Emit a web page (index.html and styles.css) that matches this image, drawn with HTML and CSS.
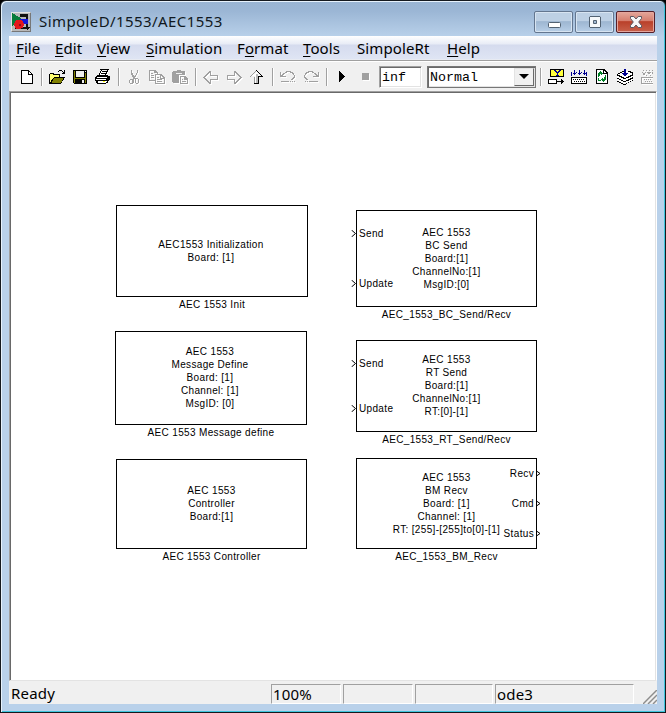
FILE: index.html
```html
<!DOCTYPE html>
<html lang="en">
<head>
<meta charset="utf-8">
<title>SimpoleD/1553/AEC1553</title>
<link rel="stylesheet" href="styles.css">
</head>
<body>
<div class="window">
  <header class="titlebar">
    <svg class="app-icon" width="20" height="20" viewBox="0 0 20 20" shape-rendering="crispEdges">
      <path fill="#b8b8b8" d="M0 0h20v20H0z"/><path fill="#e4e4e4" d="M0 0h19v1H1v18H0z"/><path fill="#777" d="M19 1h1v19H1v-1h18z"/>
      <path fill="#111" d="M9 2h8v13h2l-3 3-3-3h2V5H9z"/>
      <path fill="#087c3b" d="M1 1l9 5v3l-9 5z"/>
      <path fill="#1515d8" d="M9 7h8v5H9z"/><path fill="#111" d="M4 15h13v2H4z"/>
      <circle cx="8" cy="12.5" r="4.8" fill="#e3171b"/><path fill="#87101a" d="M8 12h2v2H8z"/>
    </svg>
    <h1 class="title">SimpoleD/1553/AEC1553</h1>
    <div class="controls">
      <button class="control" aria-label="Minimize"><svg width="14" height="14" viewBox="0 0 14 14"><rect x="1.500" y="7.500" width="12" height="5" rx="1" fill="#fff" stroke="#526272"/></svg></button>
      <button class="control" aria-label="Maximize"><svg width="14" height="14" viewBox="0 0 14 14"><path fill="#f5f8fa" fill-rule="evenodd" stroke="#526272" d="M2 1.500h10l.5.5v10l-.5.5H2l-.5-.5V2zM5.500 5.500v3h3v-3z"/></svg></button>
      <button class="control close" aria-label="Close"><svg width="14" height="14" viewBox="0 0 14 14"><path fill="#f7f7f7" stroke="#5b5963" stroke-linejoin="round" d="M1.500 1.500h3.300L7 4l2.200-2.500h3.300v2L9.700 7l2.800 3.500v2H9.200L7 10l-2.200 2.500H1.500v-2L4.300 7 1.500 3.500z"/></svg></button>
    </div>
  </header>
  <main class="client">
    <nav class="menu">
      <span class="m-file"><u>F</u>ile</span><span class="m-edit"><u>E</u>dit</span><span class="m-view"><u>V</u>iew</span><span class="m-sim"><u>S</u>imulation</span><span class="m-format">F<u>o</u>rmat</span><span class="m-tools"><u>T</u>ools</span><span class="m-rt">SimpoleRt</span><span class="m-help"><u>H</u>elp</span>
    </nav>
    <div class="toolbar">
      <span class="tool first"><svg viewBox="0 0 16 16"><path fill="#fff" d="M3 2h7l3 3v9H3z"/><path d="M2 1h8v1H3v12h10V5h1v10H2zM10 2h1v1h1v1h1v1h1v1H9V2z"/><path fill="#fff" d="M10 3h1v1h1v1h-2z"/></svg></span>
      <i class="sep"></i>
      <span class="tool"><svg viewBox="0 0 16 16"><path fill="#ffff70" d="M1 5h4v1h6v3H5l-3 5H1z"/><path fill="#808000" d="M5 9h10l-3 5H2z"/><path d="M1 4h4v1h6v3h-1V6H4V5H1v8h1v-2h1v-1h1V9h1V8h11v1h-1v2h-1v1h-1v2h-1v1H0V5h1zM5 9v1H4v2H3v2h9v-1h1v-2h1V9zM9 2h1V1h3v1h1v1h1V1h1v4h-3V4h1V3h-1V2h-3v1H9z"/></svg></span>
      <span class="tool"><svg viewBox="0 0 16 16"><path d="M1 1h14v14H2v-1H1z"/><path fill="#808000" d="M2 2h1v7h10V4h1v10h-1v-4H3v4H2z"/><path fill="#efefef" d="M4 2h8v6H4zM13 2h1v1h-1zM10 11h2v3h-2z"/></svg></span>
      <span class="tool"><svg viewBox="0 0 16 16"><path fill="#fff" d="M5 2h9l-2 5 2 1-2 6H2L1 9l3-3z"/><path d="M5 0h9v1h-1v2h-1v2h-1v1h2v1h2v4h-1v1h-1v2h-2v1H2v-1H1v-2H0V8h1V7h1V6h2V4h1V2h1V1H5zM7 1v1H6v2H5v2h5V4h1V2h1V1zM2 8v1h10V8zm-1 2v1h10v-1zm2 2v2h8v-1h1v-1z" fill-rule="evenodd"/><path d="M7 2h4v1H7zM6 4h4v1H6zM12 8h1v1h-1zM13 10h1v1h-1z"/><path fill="#ffff00" d="M8 12h2v1H8z"/></svg></span>
      <i class="sep"></i>
      <span class="tool"><svg class="off" viewBox="0 0 16 16"><path d="M5 1h1v3h1v2h1v1h1V6h1V4h1V1h1v3h-1v2h-1v2H9v1h3v1h1v4h-1v1h-2v-1H9v-4H8v4H7v1H4v-1H3v-3h1v-1h3V8H6V6H5zm0 10H4v3h2v-3zm5-1v4h2v-4z"/></svg></span>
      <span class="tool"><svg class="off" viewBox="0 0 16 16"><path d="M0 1h6l3 3v1H8V4H5V2H1v9h5v1H0zM6 5h6l4 4v6H6zm1 1v8h8v-4h-4V6zm5 1v2h2zM2 4h2v1H2zM2 6h3v1H2zM2 8h3v1H2zM8 8h2v1H8zM8 10h5v1H8zM8 12h5v1H8z"/></svg></span>
      <span class="tool"><svg class="off" viewBox="0 0 16 16"><path d="M1 2h4V1h4v1h4v4H7v8H1V13H0V3h1zM8 7h5l3 3v5H8zm1 1v6h6v-3h-3V8zm1 2h1v1h-1zm0 2h4v1h-4z"/><path fill="#efefef" d="M4 4h6v1H4z"/></svg></span>
      <i class="sep"></i>
      <span class="tool"><svg class="off" viewBox="0 0 16 16"><path d="M6 2h2v4h7v5H8v4H6v-1H5v-1H4v-1H3v-1H2v-1H1V9H0V8h1V7h1V6h1V5h1V4h1V3h1zm0 2v1H5v1H4v1H3v1H2v1h1v1h1v1h1v1h1v1h1v-3h7V7H7V4z"/></svg></span>
      <span class="tool"><svg class="off" viewBox="0 0 16 16"><path transform="translate(16 0) scale(-1 1)" d="M6 2h2v4h7v5H8v4H6v-1H5v-1H4v-1H3v-1H2v-1H1V9H0V8h1V7h1V6h1V5h1V4h1V3h1zm0 2v1H5v1H4v1H3v1H2v1h1v1h1v1h1v1h1v1h1v-3h7V7H7V4z"/></svg></span>
      <span class="tool"><svg viewBox="0 0 16 16"><path fill="#999" d="M7 1h1v1H7v1H6v1H5v1H4v1H3v1H2v1h4v7H5V8H1V7h1V6h1V5h1V4h1V3h1V2h1z"/><path fill="#fff" d="M7 3h1v1h1v1h1v1h1v1H9v7H6V7H3V6h1V5h2V4h1z"/><path fill="#bbb" d="M7 5h2v9H7z"/><path d="M7 1h1v1h1v1h1v1h1v1h1v1h1v1h1v1h-4v7H5v-1h4V7h3V6h-1V5h-1V4H9V3H8V2H7z"/></svg></span>
      <i class="sep"></i>
      <span class="tool"><svg class="off" viewBox="0 0 16 16"><path d="M0 3h1v3h1V5h1V4h2V3h1V2h5v1h2v1h1v2h1v3h-1v1h-1v1h-2v-1h1V9h1V8h1V6h-1V5h-1V4h-2V3H7v1H5v1H4v1H3v1h3v1H0zM1 12h8v1H1zM10 12h1v1h-1zM12 12h1v1h-1zM14 12h1v1h-1z"/></svg></span>
      <span class="tool"><svg class="off" viewBox="0 0 16 16"><path transform="translate(16 0) scale(-1 1)" d="M0 3h1v3h1V5h1V4h2V3h1V2h5v1h2v1h1v2h1v3h-1v1h-1v1h-2v-1h1V9h1V8h1V6h-1V5h-1V4h-2V3H7v1H5v1H4v1H3v1h3v1H0z"/><path d="M2 12h1v1H2zM4 12h1v1H4zM6 12h9v1H6z"/></svg></span>
      <i class="sep"></i>
      <span class="tool"><svg viewBox="0 0 16 16"><path d="M5 2h1v1h1v1h1v1h1v1h1v1h1v1h-1v1H9v1H8v1H7v1H6v1H5z"/></svg></span>
      <span class="tool"><svg class="off" viewBox="0 0 16 16"><path d="M5 4h7v7H5z"/></svg></span>
      <span class="field stop-time">inf</span>
      <span class="field mode"><span>Normal</span><b class="drop"></b></span>
      <i class="sep"></i>
      <span class="tool"><svg viewBox="0 0 16 16"><path d="M2 0h14v8H2z"/><path fill="#ffff3c" d="M3 1h12v6H3z"/><path fill="#000090" d="M6 1h2v1h1v1h1V2h1V1h2v1h-1v1h-1v1h-1v2h1v1H8V6h1V4H8V3H7V2H6z"/><path fill="#fff" d="M1 11h7v3H1z"/><path d="M0 10h9v2h4v-2h1v1h1v1h1v1h-1v1h-1v1h-1v-2H9v2H0zm1 1v3h7v-3z"/></svg></span>
      <span class="tool"><svg viewBox="0 0 16 16"><path fill="#fff" d="M1 9h14v5H1z"/><path d="M0 8h16v7H0zm1 1v5h14V9z"/><path d="M2 10h1v1H2zM4 10h1v1H4zM6 10h1v1H6zM8 10h1v1H8zM10 10h1v1h-1zM12 10h1v1h-1zM3 12h1v1H3zM5 12h1v1H5zM7 12h1v1H7zM9 12h1v1H9zM11 12h1v1h-1zM13 12h1v1h-1z"/><path fill="#000090" d="M3 1h1v3h1v1H4v1H3V5H2V4h1zM8 1h1v3h1v1H9v1H8V5H7V4h1zM13 1h1v3h1v1h-1v1h-1V5h-1V4h1zM0 3h1v4H0zM5 3h1v1H5zM10 3h1v1h-1zM15 3h1v4h-1z"/></svg></span>
      <span class="tool"><svg viewBox="0 0 16 16"><path fill="#fff" d="M3 1h8l3 3v11H3z"/><path d="M2 0h9v1h1v1h1v1h1v12H2zm1 1v13h10V5H9V1zm7 1v2h2V3h-1V2z" fill-rule="evenodd"/><path fill="#008025" d="M6 2h1v1h1v1h1v1H8v1H7V5H6v2H5v1H4V4h1V3h1zM11 6h1v5h-1v1h-1v1H9v-1H8v-1H7v-1h1V9h1v1h1V8h1zM4 9h1v2h2v1H4z"/></svg></span>
      <span class="tool"><svg viewBox="0 0 16 16"><path fill="#fff" d="M0 5l8-4 8 4v6l-9 4-7-4z"/><path d="M5 2h2v1H5v1H3v1H1v1h2v1h2v1h2v1h2V8h2V7h2V6h2V4h-2V3h-2V2h3v1h2v1h1v2h-1v1h-2v1h-2v1H9v1H6V9H4V8H2V7H0V5h1V4h2V3h2zM0 9h2v1h2v1h2v1h3v-1h2v-1h2V9h2V8h1v2h-2v1h-2v1H9v1H6v-1H4v-1H2v-1H0zM0 12h2v1h2v1h2v1h3v-1h2v-1h2v-1h2v-1h1v1h-2v1h-2v1h-2v1H9v1H6v-1H4v-1H2v-1H0z"/><path fill="#000090" d="M7 0h2v4h2v1h-1v1H9v1H7V6H6V5H5V4h2z"/></svg></span>
      <span class="tool last"><svg class="off" viewBox="0 0 16 16"><path d="M3 1h1v1H3zM6 1h1v1H6zM9 1h1v1H9zM12 1h1v1h-1zM2 3h1v1H2zM5 3h1v1H5zM7 3h4v1h-1v1H8V4H7zM12 3h1v2h-1zM3 4h2v2H3zM6 6h1v1H6zM10 6h1v1h-1zM1 8h12v1H2v5h11v1H1zM4 10h1v1H4zM6 10h1v1H6zM8 10h1v1H8zM10 10h1v1h-1zM5 12h1v1H5zM7 12h1v1H7zM9 12h1v1H9zM11 12h1v1h-1z"/></svg></span>
    </div>
    <section class="canvas">
      <div class="block init"><p>AEC1553 Initialization</p><p>Board: [1]</p><div class="name">AEC 1553 Init</div></div>
      <div class="block define"><p>AEC 1553</p><p>Message Define</p><p>Board: [1]</p><p>Channel: [1]</p><p>MsgID: [0]</p><div class="name">AEC 1553 Message define</div></div>
      <div class="block controller"><p>AEC 1553</p><p>Controller</p><p>Board:[1]</p><div class="name">AEC 1553 Controller</div></div>
      <div class="block bc"><p>AEC 1553</p><p>BC Send</p><p>Board:[1]</p><p>ChannelNo:[1]</p><p>MsgID:[0]</p><div class="name">AEC_1553_BC_Send/Recv</div>
        <span class="port in bc-send"><svg viewBox="0 0 5 7"><path d="M.5 0l4 3.500-4 3.500"/></svg>Send</span><span class="port in bc-update"><svg viewBox="0 0 5 7"><path d="M.5 0l4 3.500-4 3.500"/></svg>Update</span></div>
      <div class="block rt"><p>AEC 1553</p><p>RT Send</p><p>Board:[1]</p><p>ChannelNo:[1]</p><p>RT:[0]-[1]</p><div class="name">AEC_1553_RT_Send/Recv</div>
        <span class="port in rt-send"><svg viewBox="0 0 5 7"><path d="M.5 0l4 3.500-4 3.500"/></svg>Send</span><span class="port in rt-update"><svg viewBox="0 0 5 7"><path d="M.5 0l4 3.500-4 3.500"/></svg>Update</span></div>
      <div class="block bm"><p>AEC 1553</p><p>BM Recv</p><p>Board: [1]</p><p>Channel: [1]</p><p>RT: [255]-[255]to[0]-[1]</p><div class="name">AEC_1553_BM_Recv</div>
        <span class="port out recv">Recv<svg viewBox="0 0 5 7"><path d="M.5 1l3.500 2.500L.5 6"/></svg></span><span class="port out cmd">Cmd<svg viewBox="0 0 5 7"><path d="M.5 1l3.500 2.500L.5 6"/></svg></span><span class="port out status-port">Status<svg viewBox="0 0 5 7"><path d="M.5 1l3.500 2.500L.5 6"/></svg></span></div>
    </section>
    <footer class="status">
      <span class="ready">Ready</span><span class="cell">100%</span><span class="cell"></span><span class="cell"></span><span class="cell">ode3</span>
      <svg class="grip" width="14" height="14" viewBox="0 0 14 14"><path stroke="#fff" d="M1 14L14 1M6 14l8-8M11 14l3-3"/><path stroke="#8d8d8d" stroke-width="1.500" d="M0 14L14 0M5 14l9-9M10 14l4-4"/></svg>
    </footer>
  </main>
</div>
</body>
</html>
```

FILE: styles.css
```css
* { box-sizing: border-box; }
body { margin: 0; background: #000; overflow: hidden; }
.window {
  width: 666px; height: 713px; padding: 1px 8px 8px;
  border: 1px solid #15191e; border-radius: 6px 6px 0 0;
  background: linear-gradient(#9ab5d3 0, #9bb6d5 10px, #b9d1ea 36px, #b9d1ea 100%);
  box-shadow: inset 1px 1px #e7f2fc, inset -1px -1px #3ec5dc;
  font: 15px/20px "Noto Sans", sans-serif; color: #000;
}
.titlebar { height: 34px; display: flex; align-items: flex-start; padding-left: 2px; }
.app-icon { margin-top: 10px; }
.title { margin: 9px 0 0 8px; font: 15px/20px "Noto Sans", sans-serif; letter-spacing: .42px; color: #101820; white-space: nowrap; }
.controls { display: flex; gap: 2px; margin: 9px 2px 0 auto; }
.control {
  width: 39px; height: 22px; padding: 0 0 0 1px; display: flex; align-items: center; justify-content: center;
  border: 1px solid #63768f; border-radius: 2px; box-shadow: inset 0 0 0 1px #d7e4f1;
  background: linear-gradient(#bdd0e4 0 45%, #9db6d1 48%, #b8cfe7);
}
.close { border-color: #55202a; box-shadow: inset 0 0 0 1px #e5a69d; background: linear-gradient(#e4a79b 0, #d67d6d 45%, #b9402a 48%, #c8614b); }
.client { width: 648px; height: 668px; background: #f0f0f0; display: flex; flex-direction: column; }
.menu {
  height: 26px; padding: 2px 0 0 7px; display: flex; flex: none; white-space: nowrap; letter-spacing: .1px;
  background: linear-gradient(#fff 0, #e8ecf6 8px, #d5dbee 9px, #dfe5f4 23px, #f0f0f0 24px, #a0a0a0 24px, #a0a0a0 25px, #fff 25px);
}
.menu u { text-decoration-thickness: 1px; text-underline-offset: 2px; text-decoration-skip-ink: none; }
.m-file { width: 39px; } .m-edit { width: 42px; } .m-view { width: 49px; } .m-sim { width: 91px; }
.m-format { width: 66px; } .m-tools { width: 54px; } .m-rt { width: 90px; } .m-help { width: 36px; }
.toolbar { height: 29px; padding: 0 0 0 6px; display: flex; flex: none; align-items: center; overflow: hidden; }
.tool { width: 23px; flex: none; height: 16px; display: flex; justify-content: flex-start; padding: 0 0 0 4px; margin-top: 1px; }
.first { width: 22px; }
.last { width: 17px; overflow: hidden; }
.tool svg { width: 16px; height: 16px; flex: none; shape-rendering: crispEdges; }
.off { fill: #a0a0a0; fill-rule: evenodd; filter: drop-shadow(1px 1px 0 #fff); }
.sep { width: 8px; height: 18px; flex: none; background: linear-gradient(90deg, transparent 4px, #a0a0a0 4px 5px, #fff 5px 6px, transparent 6px); }
.field {
  height: 22px; flex: none; background: #fff; border: 1px solid; border-color: #a0a0a0 #fff #fff #a0a0a0;
  box-shadow: inset 1px 1px #696969, inset -1px -1px #e3e3e3;
  font: 13.33px/22px "Liberation Mono", monospace; padding-left: 2px;
}
.stop-time { width: 43px; margin-left: 3px; }
.mode { width: 109px; margin: 0 0 0 5px; display: flex; justify-content: space-between; padding: 0 1px 0 2px; border-color: #777; }
.drop {
  width: 20px; height: 18px; margin-top: 1px; background: #f0f0f0; border: 1px solid; border-color: #e3e3e3 #696969 #696969 #e3e3e3;
  display: flex; align-items: center; justify-content: center;
}
.drop::after { content: ""; border: 5px solid transparent; border-top-color: #000; border-bottom: 0; }
.canvas {
  position: relative; height: 590px; flex: none; background: #fff; border: 1px solid; border-color: #a0a0a0 #fff #e3e3e3 #a0a0a0;
  box-shadow: inset 1px 1px #696969, inset -1px 0 #e3e3e3; font: 10px/13px "Liberation Sans", sans-serif; letter-spacing: .34px;
}
.block { position: absolute; border: 1px solid #000; display: flex; flex-direction: column; align-items: center; justify-content: center; white-space: nowrap; }
.block p { margin: 0; }
.name { position: absolute; top: 100%; left: 50%; transform: translateX(-50%); margin-top: 2px; }
.init { left: 106px; top: 113px; width: 192px; height: 92px; padding-right: 2px; }
.define { left: 105px; top: 239px; width: 192px; height: 94px; padding-bottom: 2px; padding-right: 2px; }
.controller { left: 106px; top: 367px; width: 191px; height: 90px; padding-bottom: 2px; }
.bc { left: 346px; top: 118px; width: 181px; height: 97px; padding-bottom: 1px; }
.rt { left: 346px; top: 248px; width: 181px; height: 92px; padding-bottom: 2px; }
.bm { left: 346px; top: 366px; width: 181px; height: 91px; padding-bottom: 1px; }
.port { position: absolute; display: flex; align-items: center; }
.port svg { width: 5px; height: 7px; fill: none; stroke: #000; }
.in { left: -6px; gap: 3px; }
.out { right: -5px; gap: 2px; }
.bc-send { top: 16px; } .bc-update { top: 66px; }
.rt-send { top: 16px; } .rt-update { top: 61px; }
.recv { top: 8px; } .cmd { top: 38px; } .status-port { top: 68px; }
.status { height: 23px; display: flex; flex: none; gap: 2px; }
.ready { width: 260px; padding-left: 2px; line-height: 25px; letter-spacing: .2px; }
.cell { width: 70px; margin-top: 3px; padding-left: 1px; line-height: 19px; letter-spacing: .2px; border: 1px solid; border-color: #a0a0a0 #fff #fff #a0a0a0; }
.cell:nth-child(4) { width: 78px; }
.cell:nth-child(5) { width: 139px; }
.grip { margin: 9px 0 0 auto; }
```
